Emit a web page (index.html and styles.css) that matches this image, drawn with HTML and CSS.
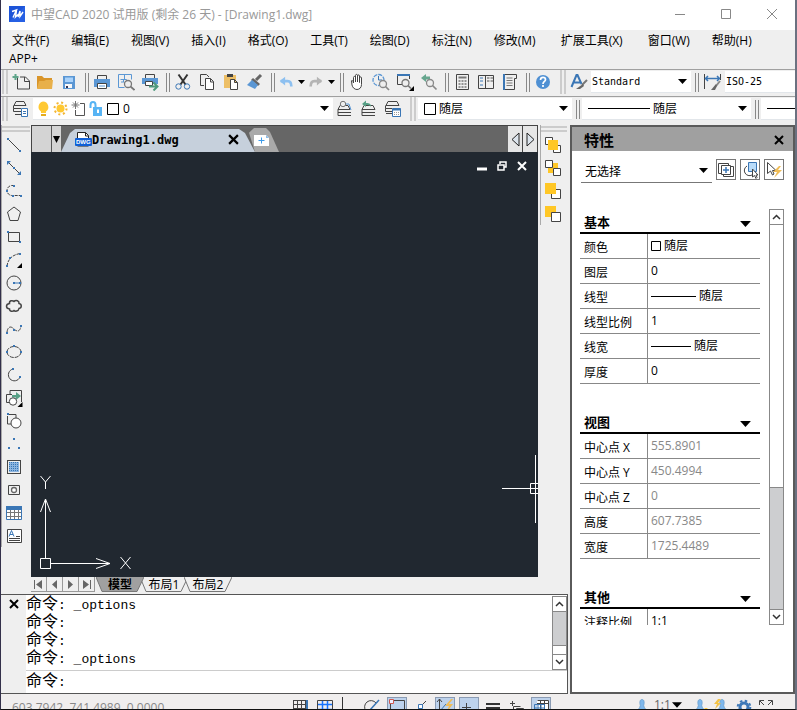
FILE: index.html
```
<!DOCTYPE html>
<html lang="zh-CN">
<head>
  <meta charset="UTF-8" />
  <meta name="viewport" content="width=device-width, initial-scale=1" />
  <title>中望CAD 2020</title>
  <link rel="stylesheet" href="styles.css">
</head>
<body>
  <svg class="defs" aria-hidden="true">
    <symbol id="down" viewBox="0 0 9 5"><path d="M0 0h9L4.500 5z" /></symbol>
    <symbol id="cross" viewBox="0 0 10 10"><path d="M1 1l8 8M9 1l-8 8" stroke="#000" stroke-width="2" /></symbol>
    <symbol id="up-chevron" viewBox="0 0 9 6"><path d="M1 5l3.500-3.500L8 5" fill="none" stroke="#333" stroke-width="1.500" /></symbol>
    <symbol id="down-chevron" viewBox="0 0 9 6"><path d="M1 1l3.500 3.500L8 1" fill="none" stroke="#333" stroke-width="1.500" /></symbol>
    <symbol id="person" viewBox="0 0 18 18"><path d="M9 1.500c2.500 0 2.500 3.500 1.700 6 .5 3 3 4.500 4.800 7v2h-13v-2c2-2.500 4.300-4 4.800-7C6.500 5 6.500 1.500 9 1.500z" fill="#7fb8ec" stroke="#5f97c9" stroke-width=".7" /></symbol>
  </svg>

  <header class="titlebar">
    <svg class="logo" width="16" height="16" viewBox="0 0 16 16">
      <rect width="16" height="16" fill="#1d54d8" />
      <path d="M0 16L16 0v16z" fill="#2f6cf0" opacity=".5" />
      <path d="M3 5.500L7.500 4 4 11.500M7.500 4.500L6.500 11 9 8.500M9 11l2-6v5.500L14 6" fill="none" stroke="#fff" stroke-width="1.400" />
    </svg>
    <h1>中望CAD 2020 试用版 (剩余 26 天) - [Drawing1.dwg]</h1>
    <button class="window-btn" aria-label="最小化"><svg width="12" height="12"><path d="M1 6.500h10" /></svg></button>
    <button class="window-btn" aria-label="最大化"><svg width="12" height="12"><path d="M1.500 1.500h9v9h-9z" /></svg></button>
    <button class="window-btn" aria-label="关闭"><svg width="12" height="12"><path d="M1 1l10 10M11 1L1 11" /></svg></button>
  </header>

  <nav class="menu">
    <button>文件(F)</button>
    <button>编辑(E)</button>
    <button>视图(V)</button>
    <button>插入(I)</button>
    <button>格式(O)</button>
    <button>工具(T)</button>
    <button>绘图(D)</button>
    <button>标注(N)</button>
    <button>修改(M)</button>
    <button class="wide">扩展工具(X)</button>
    <button>窗口(W)</button>
    <button>帮助(H)</button>
    <button class="app-plus">APP+</button>
  </nav>

  <div class="toolbar">
    <span class="grip"></span>
    <button class="tool" aria-label="新建"><svg viewBox="0 0 18 18"><path d="M5.500 5v11h12V8l-4-4H8M12.500 4v4.500h5" class="ink" /><path d="M3.500 1v6M.5 4h6" stroke="#5fa58a" stroke-width="2" /></svg></button>
    <button class="tool" aria-label="打开"><svg viewBox="0 0 18 18"><path d="M1 3h5l2 2h8v10H1z" fill="#d9952a" /><path d="M3 8h5l2-1h7l-1 9H1z" fill="#e8b04a" /></svg></button>
    <button class="tool" aria-label="保存"><svg viewBox="0 0 18 18"><path d="M3 3h12v13H3z" fill="#5b97d4" /><path d="M5 4.500h8V9H5z" fill="#a9d2fb" /><path d="M5 11h7v4H5z" fill="#f7f7f7" /><path d="M6 13h2v2H6z" fill="#335" /></svg></button>
    <span class="sep"></span>
    <button class="tool" aria-label="打印"><svg viewBox="0 0 18 18"><path d="M4.500 7V2.500h9V7" class="ink" fill="#fff" /><path d="M1 6h16v8H1z" fill="#5b97d4" /><path d="M4.500 10.500h9v5h-9z" class="ink paper" /><path d="M6 13h6" stroke="#5b97d4" /></svg></button>
    <button class="tool" aria-label="打印预览"><svg viewBox="0 0 18 18"><path d="M1.500 1.500h13v5M1.500 1.500v13h6M3.500 6.500h4v-5M6.500 9v-2.500h3V9M4 9h3" fill="none" stroke="#5b97d4" /><circle cx="11" cy="11" r="3.500" fill="#eee" stroke="#777" stroke-width="1.300" /><path d="M13.500 13.500l4 3.500" stroke="#777" stroke-width="1.700" /></svg></button>
    <button class="tool" aria-label="发布"><svg viewBox="0 0 18 18"><path d="M4.500 6V1.500h9V6" class="ink" fill="#fff" /><path d="M1 5h16v6H1z" fill="#5b97d4" /><path d="M4.500 8.500h7v4h-7z" class="ink paper" /><path d="M8 13.500h8M12.500 9.500l4 4-4 4" fill="none" stroke="#4f9a7d" stroke-width="2" /></svg></button>
    <span class="sep"></span>
    <button class="tool" aria-label="剪切"><svg viewBox="0 0 18 18"><path d="M4.500 1.500l7 10M13.500 1.500l-7 10" stroke="#333" stroke-width="2" /><circle cx="4.500" cy="13.500" r="2.700" class="blue" /><circle cx="13" cy="13.500" r="2.700" class="blue" /></svg></button>
    <button class="tool" aria-label="复制"><svg viewBox="0 0 18 18"><path d="M6 12.500H2.500v-11h6L11 4" class="ink" /><path d="M7.500 5.500h5l3 3v8h-8zM12.500 5.500v3.500h3" class="ink paper" /></svg></button>
    <button class="tool" aria-label="粘贴"><svg viewBox="0 0 18 18"><path d="M2 2h12v13H2z" fill="#edbf66" /><path d="M5 1h6v3H5z" fill="#444" /><path d="M8.500 6.500h4l3 3v7h-7zM12.500 6.500v3h3" class="ink paper" /></svg></button>
    <button class="tool" aria-label="特性匹配"><svg viewBox="0 0 18 18"><path d="M10 7l5-5" stroke="#666" stroke-width="3" /><path d="M7 5l7 6-2 2-7-6z" fill="#666" /><path d="M6 7l6 5-3 4-8-4z" fill="#5b97d4" /></svg></button>
    <span class="sep"></span>
    <button class="tool narrow" aria-label="放弃"><svg viewBox="0 0 18 18"><path d="M3 8h8c3 0 4 2 4 6" fill="none" stroke="#8dc0f0" stroke-width="3" /><path d="M8 3v10L2 8z" fill="#8dc0f0" /></svg></button>
    <button class="drop" aria-label="放弃列表"><svg width="7" height="4"><use href="#down" /></svg></button>
    <button class="tool narrow" aria-label="重做"><svg viewBox="0 0 18 18"><path d="M15 8H7c-3 0-4 2-4 6" fill="none" stroke="#b4b4b4" stroke-width="3" /><path d="M10 3v10l6-5z" fill="#b4b4b4" /></svg></button>
    <button class="drop" aria-label="重做列表"><svg width="7" height="4"><use href="#down" /></svg></button>
    <span class="sep"></span>
    <button class="tool" aria-label="平移"><svg viewBox="0 0 18 18"><path d="M5.500 10V4.500c0-1.500 2-1.500 2 0V9 2.500c0-1.500 2-1.500 2 0V9 3c0-1.500 2-1.500 2 0v6.500V5c0-1.500 2-1.500 2 0v6.500c0 3-2 5-4.500 5s-4.500-2-5-4.500l-.5-4c0-1 1.500-1 2 2z" class="ink paper" /></svg></button>
    <button class="tool" aria-label="实时缩放"><svg viewBox="0 0 18 18"><circle cx="6.500" cy="7" r="5.500" fill="none" stroke="#5b97d4" stroke-width="1.300" stroke-dasharray="4 1" /><path d="M6.500 3v4H10" class="blue" /><circle cx="11" cy="11" r="3.500" fill="#eee" stroke="#888" stroke-width="1.300" /><path d="M13.500 13.500l3.500 3.500" stroke="#888" stroke-width="1.700" /></svg></button>
    <button class="tool" aria-label="窗口缩放"><svg viewBox="0 0 18 18"><path d="M6 11.500H1.500v-9h12V6" class="ink" /><path d="M1 2h13" stroke="#3a76b5" stroke-width="2" /><circle cx="9.500" cy="10" r="3.500" fill="#eee" stroke="#777" stroke-width="1.300" /><path d="M12 12.500l3 3" stroke="#777" stroke-width="1.700" /><path d="M18 13v5h-5z" /></svg></button>
    <button class="tool" aria-label="缩放上一个"><svg viewBox="0 0 18 18"><path d="M1 5l5-4v2.500h4v3H6V9z" fill="#66a68e" /><circle cx="10" cy="10" r="3.500" fill="#eee" stroke="#888" stroke-width="1.300" /><path d="M12.500 12.500l4 4" stroke="#888" stroke-width="1.700" /></svg></button>
    <span class="sep"></span>
    <button class="tool" aria-label="计算器"><svg viewBox="0 0 18 18"><path d="M3.500 1.500h12v15h-12z" class="ink" /><path d="M5.500 4.500h8" stroke="#777" stroke-width="2" /><path d="M5.500 8h8M5.500 11h8M5.500 14h8" stroke="#777" stroke-width="1.500" stroke-dasharray="2 1" /></svg></button>
    <button class="tool" aria-label="设计中心"><svg viewBox="0 0 18 18"><path d="M1.500 2.500h15v13h-15zM8.500 2.500v13" class="ink" /><path d="M3 5h3M3 8h3M3 12h3" class="blue" /><path d="M10 5h2.500M13.500 5H16M10 8h2.500M13.500 8H16" stroke="#888" stroke-width="1.500" /></svg></button>
    <button class="tool" aria-label="特性"><svg viewBox="0 0 18 18"><path d="M2.500 1.500h13v4h-2v11h-11z" class="ink" /><path d="M3 1v16" stroke="#3a76b5" stroke-width="2" /><path d="M5.500 5h6M5.500 7.500h6M5.500 10h6M5.500 12.500h6" stroke="#777" /></svg></button>
    <span class="sep"></span>
    <button class="tool" aria-label="帮助"><svg viewBox="0 0 18 18"><circle cx="9" cy="9" r="7" fill="#4f90d3" /><path d="M6.500 7c0-3.500 5-3.200 5-.3C11.500 8.500 9 8.500 9 11M9 12v2" fill="none" stroke="#fff" stroke-width="1.700" /></svg></button>
    <span class="grip wide"></span>
    <button class="tool" aria-label="文字样式"><svg viewBox="0 0 18 18"><path d="M1.500 14l5-12h1l4 9M4 9.500h6" fill="none" stroke="#3a76b5" stroke-width="2" /><path d="M17 7l-5 5" stroke="#777" stroke-width="2" /><path d="M13 11l1 2-4 3-4 0z" fill="#666" /></svg></button>
    <span class="combo combo-style">
      <select class="mono" aria-label="文字样式列表"><option>Standard</option></select>
      <svg class="caret" width="9" height="5"><use href="#down" /></svg>
    </span>
    <span class="sep"></span>
    <button class="tool" aria-label="标注样式"><svg viewBox="0 0 18 18"><path d="M1.500 1v15M17.500 1v6" stroke="#444" /><path d="M2 5.500h15M5 3L2.500 5.500 5 8M14 3l2.500 2.500L14 8" fill="none" stroke="#3a76b5" stroke-width="1.500" /><path d="M17 8l-4 5" stroke="#888" stroke-width="2" /><path d="M13 11l1 2-2 4H8z" fill="#666" /></svg></button>
    <span class="combo combo-rest">
      <select class="mono" aria-label="标注样式列表"><option>ISO-25</option></select>
    </span>
  </div>

  <div class="toolbar layers">
    <span class="grip"></span>
    <button class="tool" aria-label="图层特性管理器"><svg viewBox="0 0 18 18"><path d="M4 1.500h8l2 4H2zM1.500 5.500v3H9M1.500 8.500v3H9M3 14.500h6" class="ink" /><path d="M9.500 8.500h6v8h-6z" fill="#fff" stroke="#3a76b5" /><path d="M11 11.500h3M11 13.500h3" class="blue" /></svg></button>
    <span class="combo combo-layer">
      <svg class="layer-icons" width="86" height="18" viewBox="0 0 86 18">
        <path d="M6 1.500a5.500 5.500 0 0 1 3 10V13H4v-1.500A5.500 5.500 0 0 1 6 1.500z" fill="#ffc933" /><path d="M4 14h5v2H4z" fill="#e5ad1c" />
        <circle cx="23.500" cy="8.500" r="4" fill="#ffc933" /><circle cx="23.500" cy="8.500" r="6" fill="none" stroke="#f3b634" stroke-width="2" stroke-dasharray="2 2.700" />
        <path d="M43 3.500h4.500v12h-9V10" fill="none" stroke="#555" /><path d="M38.500 1v8M34.500 5h8M36 2.500l5 5M41 2.500l-5 5" stroke="#777" />
        <path d="M53.500 8V5c0-4 5-4 5 0v3" fill="none" stroke="#57b4f4" stroke-width="2" /><path d="M56 7h9v9h-9z" fill="#57b4f4" /><path d="M60 9.500h2V13h-2z" fill="#fff" />
        <path d="M70.500 3.500h11v11h-11z" fill="#fff" stroke="#000" />
      </svg>
      <select aria-label="图层"><option>0</option></select>
      <svg class="caret" width="9" height="5"><use href="#down" /></svg>
    </span>
    <button class="tool" aria-label="将对象的图层置为当前"><svg viewBox="0 0 18 18"><path d="M4 5.500h8l2 4H2zM2 12.500h13M2 15.500h13M2 9.500v6" class="ink" /><path d="M8 4h5l2 6" fill="none" stroke="#5b97d4" /><circle cx="7" cy="4" r="2.700" fill="#eee" stroke="#777" /></svg></button>
    <button class="tool" aria-label="上一个图层"><svg viewBox="0 0 18 18"><path d="M4 5.500h9l2 4H2zM2 12.500h13M2 15.500h13M2 9.500v6" class="ink" /><path d="M2 4l4-3.500V3c4 0 5 1 5 4-1-1.500-2-2-5-2v2z" fill="#57a086" /></svg></button>
    <button class="tool" aria-label="图层状态管理器"><svg viewBox="0 0 18 18"><path d="M4 1.500h9l2 4H2zM1.500 5.500v3H8M1.500 8.500v3H8M2 13.500h6" class="ink" /><path d="M8.500 8.500h8v8h-8z" fill="#fff" stroke="#3a76b5" /><path d="M8.500 9.500h8" stroke="#3a76b5" stroke-width="2" /><path d="M10 12.500h5M10 14.500h5" stroke="#999" stroke-dasharray="1 1" /></svg></button>
    <span class="grip wide"></span>
    <span class="combo combo-color">
      <svg class="swatch" width="12" height="12"><path d="M.5.500h11v11H.5z" fill="#fff" stroke="#000" /></svg>
      <select aria-label="颜色控制"><option>随层</option></select>
      <svg class="caret" width="9" height="5"><use href="#down" /></svg>
    </span>
    <span class="sep"></span>
    <span class="combo combo-line">
      <svg class="swatch" width="62" height="1"><path d="M0 .5h62" stroke="#000" /></svg>
      <select aria-label="线型控制"><option>随层</option></select>
      <svg class="caret" width="9" height="5"><use href="#down" /></svg>
    </span>
    <span class="sep"></span>
    <span class="combo combo-rest">
      <svg class="swatch" width="62" height="1"><path d="M0 .5h62" stroke="#000" /></svg>
      <select aria-label="线宽控制"><option></option></select>
    </span>
  </div>

  <main>
    <div class="left">
      <div class="work">
        <div class="palette draw">
          <span class="hgrip"></span>
          <button class="tool" aria-label="直线"><svg viewBox="0 0 18 18"><path d="M3 3l12 12" class="ink" /><path d="M2 2h2v2H2zM14 14h2v2h-2z" class="dot" /></svg></button>
          <button class="tool" aria-label="构造线"><svg viewBox="0 0 18 18"><path d="M4 4l10 10" class="ink" /><path d="M2 2h4L2 6zM16 16h-4l4-4zM8 8h2v2H8z" class="dot" /></svg></button>
          <button class="tool" aria-label="多段线"><svg viewBox="0 0 18 18"><path d="M9 3.500H7a5 5 0 0 0 0 10h9" class="ink" stroke-dasharray="3 1" /><path d="M8 3h2v2H8zM1 8h2v2H1zM7 13h2v2H7zM15 13h2v2h-2z" class="dot" /></svg></button>
          <button class="tool" aria-label="多边形"><svg viewBox="0 0 18 18"><path d="M9 2l6.500 5-2.500 8.500H5L2.500 7z" class="ink" /></svg></button>
          <button class="tool" aria-label="矩形"><svg viewBox="0 0 18 18"><path d="M3.500 4.500h11v9h-11z" class="ink" /><path d="M2 3h2v2H2zM14 13h2v2h-2z" class="dot" /></svg></button>
          <button class="tool" aria-label="圆弧"><svg viewBox="0 0 18 18"><path d="M2 15C3 8 7 4 15 2.500" class="ink" stroke-dasharray="3 1" /><path d="M1 14h2v2H1zM4 6h2v2H4zM14 2h2v2h-2z" class="dot" /><path d="M17 12v5h-5z" /></svg></button>
          <button class="tool" aria-label="圆"><svg viewBox="0 0 18 18"><circle cx="9" cy="9" r="7" class="ink" /><path d="M9 9h6" class="blue" /><path d="M8 8h2v2H8zM14 8h2v2h-2z" class="dot" /></svg></button>
          <button class="tool" aria-label="修订云线"><svg viewBox="0 0 18 18"><path d="M4.500 6.500C4 3.500 7.500 3 9 4.500c2-2 5.500-.5 5 2 3 .5 3 4.500 0 5-.5 3-4 3-5 2-1.500 1.500-4.500 1-4.500-1.500-4-.5-4-5 0-5.500z" class="ink" stroke-width="1.500" /></svg></button>
          <button class="tool" aria-label="样条曲线"><svg viewBox="0 0 18 18"><path d="M2 12c1-6 4-6 7-3s6 3 7-3" class="ink" stroke-dasharray="4 1" /><path d="M1 12h2v2H1zM8 9h2v2H8zM15 5h2v2h-2z" class="dot" /></svg></button>
          <button class="tool" aria-label="椭圆"><svg viewBox="0 0 18 18"><ellipse cx="9" cy="9" rx="7" ry="5.500" class="ink" stroke-dasharray="4 1" /><path d="M8 2h2v2H8zM1 8h2v2H1zM15 8h2v2h-2z" class="dot" /></svg></button>
          <button class="tool" aria-label="椭圆弧"><svg viewBox="0 0 18 18"><path d="M8 3a6 6 0 1 0 7 8" class="ink" /><path d="M7 2h2v2H7zM14 10h2v2h-2z" class="dot" /></svg></button>
          <button class="tool" aria-label="插入块"><svg viewBox="0 0 18 18"><path d="M5 5V1.500h11.500V13M7 5.500H1.500v8H5" class="ink" /><path d="M7 6h4V3l5 4-5 4V8.500H7z" fill="#57a086" /><circle cx="8" cy="12.500" r="3.700" class="ink paper" /><path d="M17.500 13v5h-5z" /></svg></button>
          <button class="tool" aria-label="创建块"><svg viewBox="0 0 18 18"><path d="M4 2.500h7V6M2.500 4v8H6" class="ink" /><circle cx="11" cy="11" r="5" class="ink paper" /><path d="M2 1h2v2H2z" class="dot" /></svg></button>
          <button class="tool" aria-label="点"><svg viewBox="0 0 18 18"><path d="M8 3h2v2H8zM3 12h2v2H3zM13 12h2v2h-2z" class="dot" /></svg></button>
          <button class="tool" aria-label="图案填充"><svg viewBox="0 0 18 18"><rect x="2.500" y="2.500" width="13" height="13" class="ink" /><path d="M4 4h10v10H4z" fill="#8db5df" /><path d="M4 4.500h10M4 6.500h10M4 8.500h10M4 10.500h10M4 12.500h10" stroke="#3676b7" stroke-dasharray="1 1" /></svg></button>
          <button class="tool" aria-label="面域"><svg viewBox="0 0 18 18"><path d="M3.500 4.500h11v9h-11z" class="ink" /><circle cx="9" cy="9" r="2.500" fill="#fff" stroke="#666" stroke-width="1.300" /></svg></button>
          <button class="tool" aria-label="表格"><svg viewBox="0 0 18 18"><path d="M1.500 2.500h15v13h-15z" fill="#fff" stroke="#3a76b5" /><path d="M5.500 5v10M9.500 5v10M13.500 5v10M2 8.500h14M2 12.500h14" stroke="#777" /><path d="M1 2h16v4H1z" fill="#3a76b5" /></svg></button>
          <button class="tool" aria-label="多行文字"><svg viewBox="0 0 18 18"><path d="M2.500 2.500h14v13h-14z" class="ink paper" /><path d="M4 9.500l2.500-6 2.500 6M5 7.500h3" class="blue" /><path d="M11 9.500h4M4 11.500h11M4 13.500h11" stroke="#444" /></svg></button>
        </div>

        <section class="drawing">
          <div class="file-tabs">
            <span class="tab-stub"></span>
            <button class="tab-list" aria-label="文件列表"><svg width="7" height="7"><path d="M0 0h7L3.500 7z" /></svg></button>
            <div class="file-tab">
              <svg width="17" height="17" viewBox="0 0 17 17"><path d="M2.500 6V1.500h8l3 3V15h-11z" fill="#fff" stroke="#222" /><path d="M10.500 1.500v3.500h3" fill="none" stroke="#222" /><rect y="7" width="17" height="8" rx="1" fill="#0f5fd6" /><text x="1" y="13" class="dwg">DWG</text></svg>
              <span>Drawing1.dwg</span>
              <button aria-label="关闭图形"><svg width="11" height="11"><use href="#cross" /></svg></button>
            </div>
            <button class="new-tab" aria-label="新建图形"><svg width="15" height="11"><path d="M0 0h12l3 3v8H0z" fill="#fff" /><path d="M12 0l3 3h-3z" fill="#8fbde8" /><path d="M7.500 2.500v6M4.500 5.500h6" stroke="#3d9be9" /></svg></button>
            <button class="tab-scroll" aria-label="向左"><svg width="9" height="15"><path d="M8 1v13L1 7.500z" /></svg></button>
            <button class="tab-scroll" aria-label="向右"><svg width="9" height="15"><path d="M1 1v13l7-6.500z" /></svg></button>
          </div>

          <div class="canvas">
            <div class="mdi">
              <button aria-label="最小化图形"><svg width="10" height="10"><path d="M0 8h10" stroke-width="3" /></svg></button>
              <button aria-label="还原图形"><svg width="10" height="10"><path d="M3 3V1h6v5H7M1 4h6v5H1z" stroke-width="1.500" /></svg></button>
              <button aria-label="关闭图形"><svg width="10" height="10"><path d="M1 1l8 8M9 1L1 9" stroke-width="2" /></svg></button>
            </div>
            <svg class="ucs" width="92" height="96" viewBox="0 0 92 96">
              <path d="M.5 84.500h10v10H.5zM5.500 84V26M.5 38l5-13 5 13M11 89.500h59M56 84.500l14 5-14 5" />
              <path d="M.5 2l5 6 5-6M5.500 8v7M80.500 83l10 12M90.500 83l-10 12" />
            </svg>
            <svg class="cursor" width="36" height="68" viewBox="0 0 36 68">
              <path d="M0 33.500h36M33.500 0v68M28.500 28.500h10v10h-10z" />
            </svg>
          </div>

          <div class="layout-tabs">
            <button class="step" aria-label="第一个"><svg width="9" height="9"><path d="M0 0h1v9H0zM8 0v9L2 4.500z" /></svg></button>
            <button class="step" aria-label="上一个"><svg width="9" height="9"><path d="M7 0v9L2 4.500z" /></svg></button>
            <button class="step" aria-label="下一个"><svg width="9" height="9"><path d="M2 0v9l5-4.500z" /></svg></button>
            <button class="step" aria-label="最后一个"><svg width="9" height="9"><path d="M8 0h1v9H8zM1 0v9l6-4.500z" /></svg></button>
            <button class="layout active"><svg viewBox="0 0 48 15" preserveAspectRatio="none"><path d="M0 0l6 14.500h35L48 0" /></svg><span>模型</span></button>
            <button class="layout"><svg viewBox="0 0 48 15" preserveAspectRatio="none"><path d="M0 0l6 14.500h35L48 0" /></svg><span>布局1</span></button>
            <button class="layout"><svg viewBox="0 0 48 15" preserveAspectRatio="none"><path d="M0 0l6 14.500h35L48 0" /></svg><span>布局2</span></button>
          </div>
        </section>

        <div class="palette order">
          <span class="hgrip"></span>
          <button class="tool" aria-label="前置"><svg viewBox="0 0 18 18"><path d="M1.500 1.500h7v7h-7zM9.500 9.500h7v7h-7z" class="ink paper" /><path d="M4 4h10v10H4z" class="gold" /></svg></button>
          <button class="tool" aria-label="后置"><svg viewBox="0 0 18 18"><path d="M4 4h10v10H4z" class="gold" /><path d="M1.500 1.500h7v7h-7zM9.500 9.500h7v7h-7z" class="ink paper" /></svg></button>
          <button class="tool" aria-label="置于对象之上"><svg viewBox="0 0 18 18"><path d="M7.500 7.500h9v9h-9z" class="ink paper" /><path d="M1 1h11v11H1z" class="gold" /></svg></button>
          <button class="tool" aria-label="置于对象之下"><svg viewBox="0 0 18 18"><path d="M1 1h11v11H1z" class="gold" /><path d="M7.500 7.500h9v9h-9z" class="ink paper" /></svg></button>
        </div>
      </div>

      <section class="command">
        <button class="command-close" aria-label="关闭命令行"><svg width="10" height="10"><use href="#cross" /></svg></button>
        <div class="command-body">
          <div class="history">
            <div class="lines">
              <p><b>命令</b>: _options</p>
              <p><b>命令</b>:</p>
              <p><b>命令</b>:</p>
              <p><b>命令</b>: _options</p>
            </div>
            <div class="scrollbar">
              <button aria-label="向上滚动"><svg width="9" height="6"><use href="#up-chevron" /></svg></button>
              <span class="thumb"></span>
              <span class="track"></span>
              <button aria-label="向下滚动"><svg width="9" height="6"><use href="#down-chevron" /></svg></button>
            </div>
          </div>
          <div class="prompt">
            <label for="cmd"><b>命令</b>:</label>
            <input type="text" id="cmd" />
          </div>
        </div>
      </section>
    </div>

    <aside class="properties">
      <header>
        <h2>特性</h2>
        <button aria-label="关闭特性"><svg width="10" height="10"><use href="#cross" /></svg></button>
      </header>
      <div class="selection">
        <span class="combo combo-select">
          <select aria-label="选择对象"><option>无选择</option></select>
          <svg class="caret" width="9" height="5"><use href="#down" /></svg>
        </span>
        <button aria-label="切换PICKADD"><svg viewBox="0 0 18 18"><path d="M4 12.500H1.500v-10h10V4M14 5.500h2.500v10h-10V14" class="ink" /><path d="M4.500 4.500h9v9h-9z" class="ink paper" /><path d="M9 6v6M6 9h6" stroke="#3a76b5" stroke-width="1.500" /></svg></button>
        <button aria-label="选择对象"><svg viewBox="0 0 18 18"><path d="M6 5a5 5 0 1 0 5 9" class="ink" /><path d="M7.500 1.500h8v9h-8z" fill="#b9dcfa" stroke="#3a76b5" /><path d="M11.500 8v8l2-1.500 1.500 3 1-1-1-2.500h2z" class="ink paper" /></svg></button>
        <button aria-label="快速选择"><svg viewBox="0 0 18 18"><path d="M2.500 1.500v11l3-2.500 2 4 1.500-1-1.500-3.500H11z" class="ink paper" /><path d="M14 5l-6 6h4l-3 6 8-8h-4l3-4z" fill="#f0bc55" /></svg></button>
      </div>

      <div class="property-area">
        <div class="property-list">
          <section>
            <h3>基本<svg width="11" height="6"><use href="#down" /></svg></h3>
            <table>
              <tr><th>颜色</th><td><svg width="10" height="10"><path d="M.5.500h9v9H.5z" /></svg> 随层</td></tr>
              <tr><th>图层</th><td>0</td></tr>
              <tr><th>线型</th><td><svg width="45" height="9"><path d="M0 4.500h45" /></svg> 随层</td></tr>
              <tr><th>线型比例</th><td>1</td></tr>
              <tr><th>线宽</th><td><svg width="40" height="9"><path d="M0 4.500h40" /></svg> 随层</td></tr>
              <tr><th>厚度</th><td>0</td></tr>
            </table>
          </section>
          <section>
            <h3>视图<svg width="11" height="6"><use href="#down" /></svg></h3>
            <table class="readonly">
              <tr><th>中心点 X</th><td>555.8901</td></tr>
              <tr><th>中心点 Y</th><td>450.4994</td></tr>
              <tr><th>中心点 Z</th><td>0</td></tr>
              <tr><th>高度</th><td>607.7385</td></tr>
              <tr><th>宽度</th><td>1725.4489</td></tr>
            </table>
          </section>
          <section>
            <h3>其他<svg width="11" height="6"><use href="#down" /></svg></h3>
            <table>
              <tr><th>注释比例</th><td>1:1</td></tr>
            </table>
          </section>
        </div>
        <div class="scrollbar">
          <button aria-label="向上滚动"><svg width="9" height="6"><use href="#up-chevron" /></svg></button>
          <span class="track"></span>
          <span class="thumb"></span>
          <button aria-label="向下滚动"><svg width="9" height="6"><use href="#down-chevron" /></svg></button>
        </div>
      </div>
    </aside>
  </main>

  <footer class="status">
    <span class="coords">603.7942, 741.4989, 0.0000</span>
    <button class="toggle" aria-label="捕捉"><svg viewBox="0 0 18 18"><path d="M1.500 2v15M5.500 2v15M9.500 2v15M13.500 2v15M1 2.500h14M1 6.500h14M1 10.500h14M1 14.500h14" class="ink" /><path d="M15 2v15" stroke="#3a76b5" stroke-width="2" /></svg></button>
    <button class="toggle" aria-label="栅格"><svg viewBox="0 0 18 18"><path d="M1.500 2.500h15v13h-15z" class="ink" /><path d="M6.500 3v13M11.500 3v13M2 6.500h14M2 11.500h14" stroke="#1673ff" stroke-width="1.500" /></svg></button>
    <span class="divider"></span>
    <button class="toggle" aria-label="极轴"><svg viewBox="0 0 18 18"><path d="M2 13a6 6 0 0 1 10-8M2 12.500h14" class="ink" /><path d="M6 12L15 2" stroke="#3a76b5" stroke-width="1.500" /></svg></button>
    <button class="toggle on" aria-label="正交"><svg viewBox="0 0 18 18"><path d="M2.500 17V2.500h14V17" class="ink" /><path d="M1.500 1.500h4v4h-4z" fill="#eef" stroke="#d05a50" /></svg></button>
    <button class="toggle" aria-label="对象捕捉"><svg viewBox="0 0 18 18"><path d="M2 15l12-12" class="ink" /><path d="M6.500 6.500h4v4h-4z" fill="#fff" stroke="#3a76b5" /></svg></button>
    <button class="toggle on" aria-label="动态UCS"><svg viewBox="0 0 18 18"><path d="M3.500 1v13h8M1 4l2.500-3L6 4" class="ink" /><path d="M4 13L10 6" class="blue" /><path d="M15 1L9 8h4l-3 7 7-9h-4l4-5z" fill="#f1bd58" /></svg></button>
    <button class="toggle on" aria-label="动态输入"><svg viewBox="0 0 18 18"><path d="M6.500 5v9M2 9.500h9M10 12.500h6" class="ink" /></svg></button>
    <button class="toggle" aria-label="线宽"><svg viewBox="0 0 18 18"><path d="M2 6h14M2 10h14" stroke="#333" stroke-width="2" /></svg></button>
    <button class="toggle" aria-label="循环选择"><svg viewBox="0 0 18 18"><path d="M4.500 3v5M2 5.500h5M5.500 14V8.500h7M8.500 16v-5.500h7V16" class="ink" /></svg></button>
    <button class="toggle on" aria-label="模型"><svg viewBox="0 0 18 18"><path d="M5 2h12v10H5z" fill="#fff" /><path d="M5.500 2.500h11v9M8.500 2v10M12.500 2v10M5 5.500h11" class="ink" /><path d="M2.500 6.500h10v10h-10zM6 7v9M9 7v9M3 10h9" fill="none" stroke="#3a76b5" /></svg></button>
    <span class="spacer"></span>
    <button class="toggle" aria-label="注释"><svg><use href="#person" /></svg></button>
    <button class="scale">1:1<svg width="10" height="6"><use href="#down" /></svg></button>
    <button class="toggle tight" aria-label="注释可见性"><svg viewBox="0 0 18 18"><use href="#person" width="18" height="18" /><circle cx="15" cy="12" r="2" fill="#ffc933" /></svg></button>
    <button class="toggle tight" aria-label="自动缩放"><svg viewBox="0 0 18 18"><use href="#person" width="18" height="18" /><path d="M5 1L1 6h3l-2 5 6-6H5l3-4z" fill="#f3c247" /></svg></button>
    <button class="toggle tight" aria-label="设置"><svg viewBox="0 0 18 18"><circle cx="9" cy="9" r="4" fill="none" stroke="#3f79b8" stroke-width="3" /><circle cx="9" cy="9" r="6.300" fill="none" stroke="#3f79b8" stroke-width="2" stroke-dasharray="2.500 2.450" /></svg></button>
    <button class="toggle tight" aria-label="全屏"><svg viewBox="0 0 18 18"><path d="M2.500 7V2.500H7M3 3l4 4M11 2.500h4.500V7M15 3l-4 4M2.500 11v4.500H7M3 15l4-4M11 15.500h4.500V11M15 15l-4-4" class="ink" /></svg></button>
  </footer>
</body>
</html>
```

FILE: styles.css
```
* {
  box-sizing: border-box;
}
body {
  margin: 0;
  height: 100vh;
  display: flex;
  flex-direction: column;
  overflow: hidden;
  border-left: 1px solid #33304a;
  border-right: 2px solid #6b7180;
  border-bottom: 1px solid #111;
  background: #efefef;
  color: #000;
  font-family: "Open Sans", "Noto Sans CJK SC", sans-serif;
  font-size: 12px;
}
button {
  display: flex;
  align-items: center;
  justify-content: center;
  flex-shrink: 0;
  margin: 0;
  padding: 0;
  border: none;
  background: none;
  color: inherit;
  font: inherit;
}
svg {
  flex-shrink: 0;
}
h1, h2, h3, p {
  margin: 0;
}
.defs {
  position: absolute;
  width: 0;
  height: 0;
}

/* shared icon colours */
.ink {
  fill: none;
  stroke: #444;
}
.paper {
  fill: #fff;
}
.blue {
  fill: none;
  stroke: #3a76b5;
}
.dot {
  fill: #3a76b5;
}
.gold {
  fill: #ffc726;
}

.titlebar {
  display: flex;
  align-items: center;
  flex-shrink: 0;
  height: 30px;
  padding: 0 0 2px 8px;
  background: #fff;
}
.titlebar h1 {
  flex: 1;
  margin-left: 6px;
  color: #999;
  font-size: 12px;
  font-weight: normal;
}
.window-btn {
  width: 46px;
  height: 28px;
}
.window-btn path {
  fill: none;
  stroke: #888;
}

.menu {
  display: flex;
  flex-wrap: wrap;
  flex-shrink: 0;
  padding-bottom: 1px;
}
.menu button {
  height: 19px;
  padding: 0 11px;
}
.menu .wide {
  padding: 0 14px;
}
.menu .app-plus {
  padding: 0 8px;
}

.toolbar {
  display: flex;
  align-items: center;
  flex-shrink: 0;
  height: 27px;
  padding-bottom: 2px;
  border-top: 1px solid #a0a0a0;
  overflow: hidden;
}
.toolbar.layers {
  height: 29px;
  padding-bottom: 4px;
}
.tool {
  width: 24px;
  height: 23px;
}
.tool.narrow {
  width: 20px;
}
.tool svg {
  width: 18px;
  height: 18px;
}
.tool.narrow svg {
  width: 16px;
  height: 16px;
}
.drop {
  width: 10px;
  height: 23px;
}
.grip {
  flex-shrink: 0;
  width: 6px;
  height: 24px;
  margin: 0 1px;
  border-left: 2px solid #ccc;
  border-right: 2px solid #ccc;
}
.grip.wide {
  margin: 0 1px 0 5px;
}
.sep {
  flex-shrink: 0;
  width: 4px;
  height: 19px;
  margin: 0 1px 0 4px;
  border-left: 1px solid #888;
  border-right: 1px solid #888;
}

.combo {
  position: relative;
  display: flex;
  align-items: center;
  height: 22px;
  background: #fff;
  border-bottom: 1px solid #e2e6ea;
}
.combo select {
  appearance: none;
  width: 100%;
  height: 21px;
  margin: 0;
  padding: 0 2px;
  border: none;
  border-radius: 0;
  background: transparent;
  color: #000;
  font-family: inherit;
  font-size: 12px;
}
.combo select.mono {
  padding-left: 1px;
  font-family: "DejaVu Sans Mono", monospace;
  font-size: 10px;
}
.caret {
  position: absolute;
  right: 4px;
  top: 8px;
  pointer-events: none;
}
.swatch {
  position: absolute;
  left: 6px;
}
.layer-icons {
  position: absolute;
  left: 4px;
}
.combo-style {
  width: 100px;
  flex-shrink: 0;
}
.combo-rest {
  flex: 1;
  margin-left: 1px;
}
.combo-layer {
  flex: 0 0 300px;
}
.combo-layer select {
  padding-left: 90px;
}
.combo-color {
  flex: 0 0 154px;
  margin-left: 1px;
}
.combo-color select {
  padding-left: 21px;
}
.combo-line {
  flex: 0 0 169px;
  margin-left: 1px;
}
.combo-line select {
  padding-left: 71px;
}

main {
  display: flex;
  flex: 1;
  min-height: 0;
}
.left {
  display: flex;
  flex-direction: column;
  flex: 1;
  min-width: 0;
}
.work {
  display: flex;
  flex: 1;
  min-height: 0;
}
.palette {
  display: flex;
  flex-direction: column;
  align-self: flex-start;
  flex-shrink: 0;
}
.palette.draw {
  width: 30px;
  border-left: 1px solid #aaa;
}
.palette.order {
  width: 28px;
  margin: 0 2px;
  border-left: 1px solid #aaa;
}
.hgrip {
  height: 6px;
  margin: 1px 1px 1px 0;
  border-top: 2px solid #ccc;
  border-bottom: 2px solid #ccc;
}

.drawing {
  display: flex;
  flex-direction: column;
  flex: 1;
  min-width: 0;
}
.file-tabs {
  display: flex;
  align-items: flex-end;
  flex-shrink: 0;
  height: 27px;
  background: #666;
  border-top: 1px solid #444;
}
.tab-stub {
  width: 21px;
  height: 26px;
  background: #d4d4d4;
  border-left: 1px solid #444;
  border-right: 1px solid #555;
}
.tab-list {
  width: 9px;
  height: 26px;
  background: #d4d4d4;
}
.file-tab {
  display: flex;
  align-items: center;
  width: 194px;
  height: 23px;
  padding: 0 16px 2px 14px;
  background: #c6d0dc;
  clip-path: polygon(0 100%, 9px 4px, 14px 0, 178px 0, 184px 4px, 100% 100%);
  font-family: "DejaVu Sans Mono", monospace;
  font-weight: bold;
  font-size: 12px;
}
.file-tab span {
  flex: 1;
}
.dwg {
  fill: #fff;
  font-family: "Liberation Sans", sans-serif;
  font-size: 6px;
  font-weight: bold;
}
.new-tab {
  width: 30px;
  height: 24px;
  margin-left: -6px;
  background: #a9a9a9;
  clip-path: polygon(0 20%, 5px 0, 17px 0, 21px 4px, 100% 100%, 6px 100%);
}
.new-tab svg {
  margin-right: 6px;
}
.tab-scroll {
  width: 15px;
  height: 26px;
  background: #e6e6e6;
  border-right: 1px solid #444;
}
.new-tab + .tab-scroll {
  margin-left: auto;
}
.tab-scroll path {
  fill: #dce4ec;
  stroke: #222;
}

.canvas {
  position: relative;
  flex: 1;
  min-height: 0;
  overflow: hidden;
  background: #212830;
}
.canvas path {
  fill: none;
  stroke: #fff;
}
.mdi {
  display: flex;
  justify-content: flex-end;
  gap: 10px;
  padding: 9px 11px;
}
.ucs {
  position: absolute;
  left: 9px;
  bottom: 7px;
}
.cursor {
  position: absolute;
  right: 0;
  top: 303px;
}

.layout-tabs {
  display: flex;
  flex-shrink: 0;
  height: 17px;
  padding-bottom: 2px;
}
.step {
  width: 16px;
  border: solid #999;
  border-width: 0 1px 1px 0;
}
.step path {
  fill: #666;
}
.layout {
  position: relative;
  width: 48px;
  margin-right: -4px;
}
.step + .layout {
  margin-left: 1px;
}
.layout svg {
  position: absolute;
  width: 100%;
  height: 100%;
}
.layout path {
  fill: #efefef;
  stroke: #777;
}
.layout.active path {
  fill: #a0a0a0;
}
.layout span {
  position: relative;
  line-height: 15px;
}
.layout.active {
  font-weight: bold;
  z-index: 1;
}

.command {
  display: flex;
  flex-shrink: 0;
  height: 100px;
  margin-right: 2px;
  border: solid #555;
  border-width: 1px 1px 1px 0;
}
.command-close {
  align-self: flex-start;
  width: 25px;
  height: 18px;
}
.command-body {
  display: flex;
  flex-direction: column;
  flex: 1;
  min-width: 0;
  background: #fff;
  font-family: "Liberation Mono", "Noto Sans CJK SC", monospace;
  font-size: 13px;
}
.command-body b {
  font-size: 16px;
  font-weight: normal;
}
.history {
  display: flex;
  flex: 1;
  padding-top: 1px;
  min-height: 0;
  border-bottom: 1px solid #ccc;
}
.lines {
  flex: 1;
}
.lines p {
  height: 18px;
  line-height: 18px;
}
.prompt {
  display: flex;
  align-items: center;
  height: 22px;
  line-height: 18px;
}
.prompt input {
  flex: 1;
  min-width: 0;
  border: none;
  background: none;
  font: inherit;
}

.scrollbar {
  display: flex;
  flex-direction: column;
  flex-shrink: 0;
  width: 15px;
  border: 1px solid #888;
}
.scrollbar button {
  height: 15px;
  background: #fff;
}
.scrollbar button:first-child {
  border-bottom: 1px solid #888;
}
.scrollbar button:last-child {
  border-top: 1px solid #888;
}
.thumb {
  flex: 4;
  background: #cdced0;
}
.track {
  flex: 1;
  background: #fff;
  border-top: 1px solid #888;
}

.properties {
  display: flex;
  flex-direction: column;
  flex-shrink: 0;
  width: 225px;
  background: #fff;
  border: 2px solid #5a5a5a;
}
.properties header {
  display: flex;
  align-items: center;
  justify-content: space-between;
  flex-shrink: 0;
  height: 24px;
  padding: 2px 9px 0 12px;
  background: #a0a0a0;
}
.properties h2 {
  font-size: 15px;
  line-height: 22px;
}
.selection {
  display: flex;
  gap: 4px;
  padding: 8px 9px 0;
}
.selection button {
  width: 20px;
  height: 21px;
  border: 1px solid #777;
}
.selection button svg {
  width: 18px;
  height: 18px;
}
.combo-select {
  flex: 1;
  height: 24px;
  padding-top: 2px;
  border-bottom: 1px solid #777;
}
.combo-select select {
  padding-left: 4px;
}
.combo-select .caret {
  top: 9px;
}
.property-area {
  display: flex;
  flex: 1;
  gap: 9px;
  min-height: 0;
  margin: 26px 9px 67px 8px;
}
.property-list {
  flex: 1;
  overflow: hidden;
}
.property-list section {
  margin-bottom: 25px;
}
.property-list h3 {
  display: flex;
  align-items: center;
  justify-content: space-between;
  height: 25px;
  padding: 2px 9px 0 4px;
  border-bottom: 2px solid #000;
  font-size: 13px;
}
.property-list h3 svg {
  margin-top: 4px;
}
.property-list table {
  width: 100%;
  table-layout: fixed;
  border-collapse: separate;
  border-spacing: 0;
}
.property-list th,
.property-list td {
  height: 25px;
  border-bottom: 1px solid #888;
  line-height: 20px;
  text-align: left;
  font-weight: normal;
  white-space: nowrap;
}
.property-list th {
  width: 68px;
  padding: 4px 0 0 4px;
  border-right: 1px solid #888;
}
.property-list td {
  padding: 0 0 0 3px;
}
.property-list td path {
  fill: none;
  stroke: #000;
}
.property-list td svg {
  vertical-align: -1px;
}
.readonly td {
  color: #888;
}
.property-area .track {
  flex: 13;
  border: none;
}
.property-area .thumb {
  flex: 6;
  border-top: 1px solid #888;
}

.status {
  display: flex;
  flex-shrink: 0;
  height: 15px;
  padding: 3px 18px 0 11px;
  overflow: hidden;
  background: #f0eeee;
}
.coords {
  flex: 0 0 277px;
  color: #888;
  line-height: 22px;
}
.toggle {
  width: 20px;
  height: 20px;
  margin: 0 2px;
}
.toggle.tight {
  margin: 0 1px;
}
.toggle svg {
  width: 18px;
  height: 18px;
}
.toggle.on {
  background: #bdd2ec;
  border: 1px solid #8a9bb3;
}
.divider {
  width: 1px;
  height: 20px;
  margin: 0 18px 0 5px;
  background: #333;
}
.spacer {
  flex: 1;
}
.scale {
  justify-content: flex-start;
  width: 35px;
  height: 15px;
  gap: 1px;
  color: #666;
}
.scale svg {
  fill: #000;
}
```
